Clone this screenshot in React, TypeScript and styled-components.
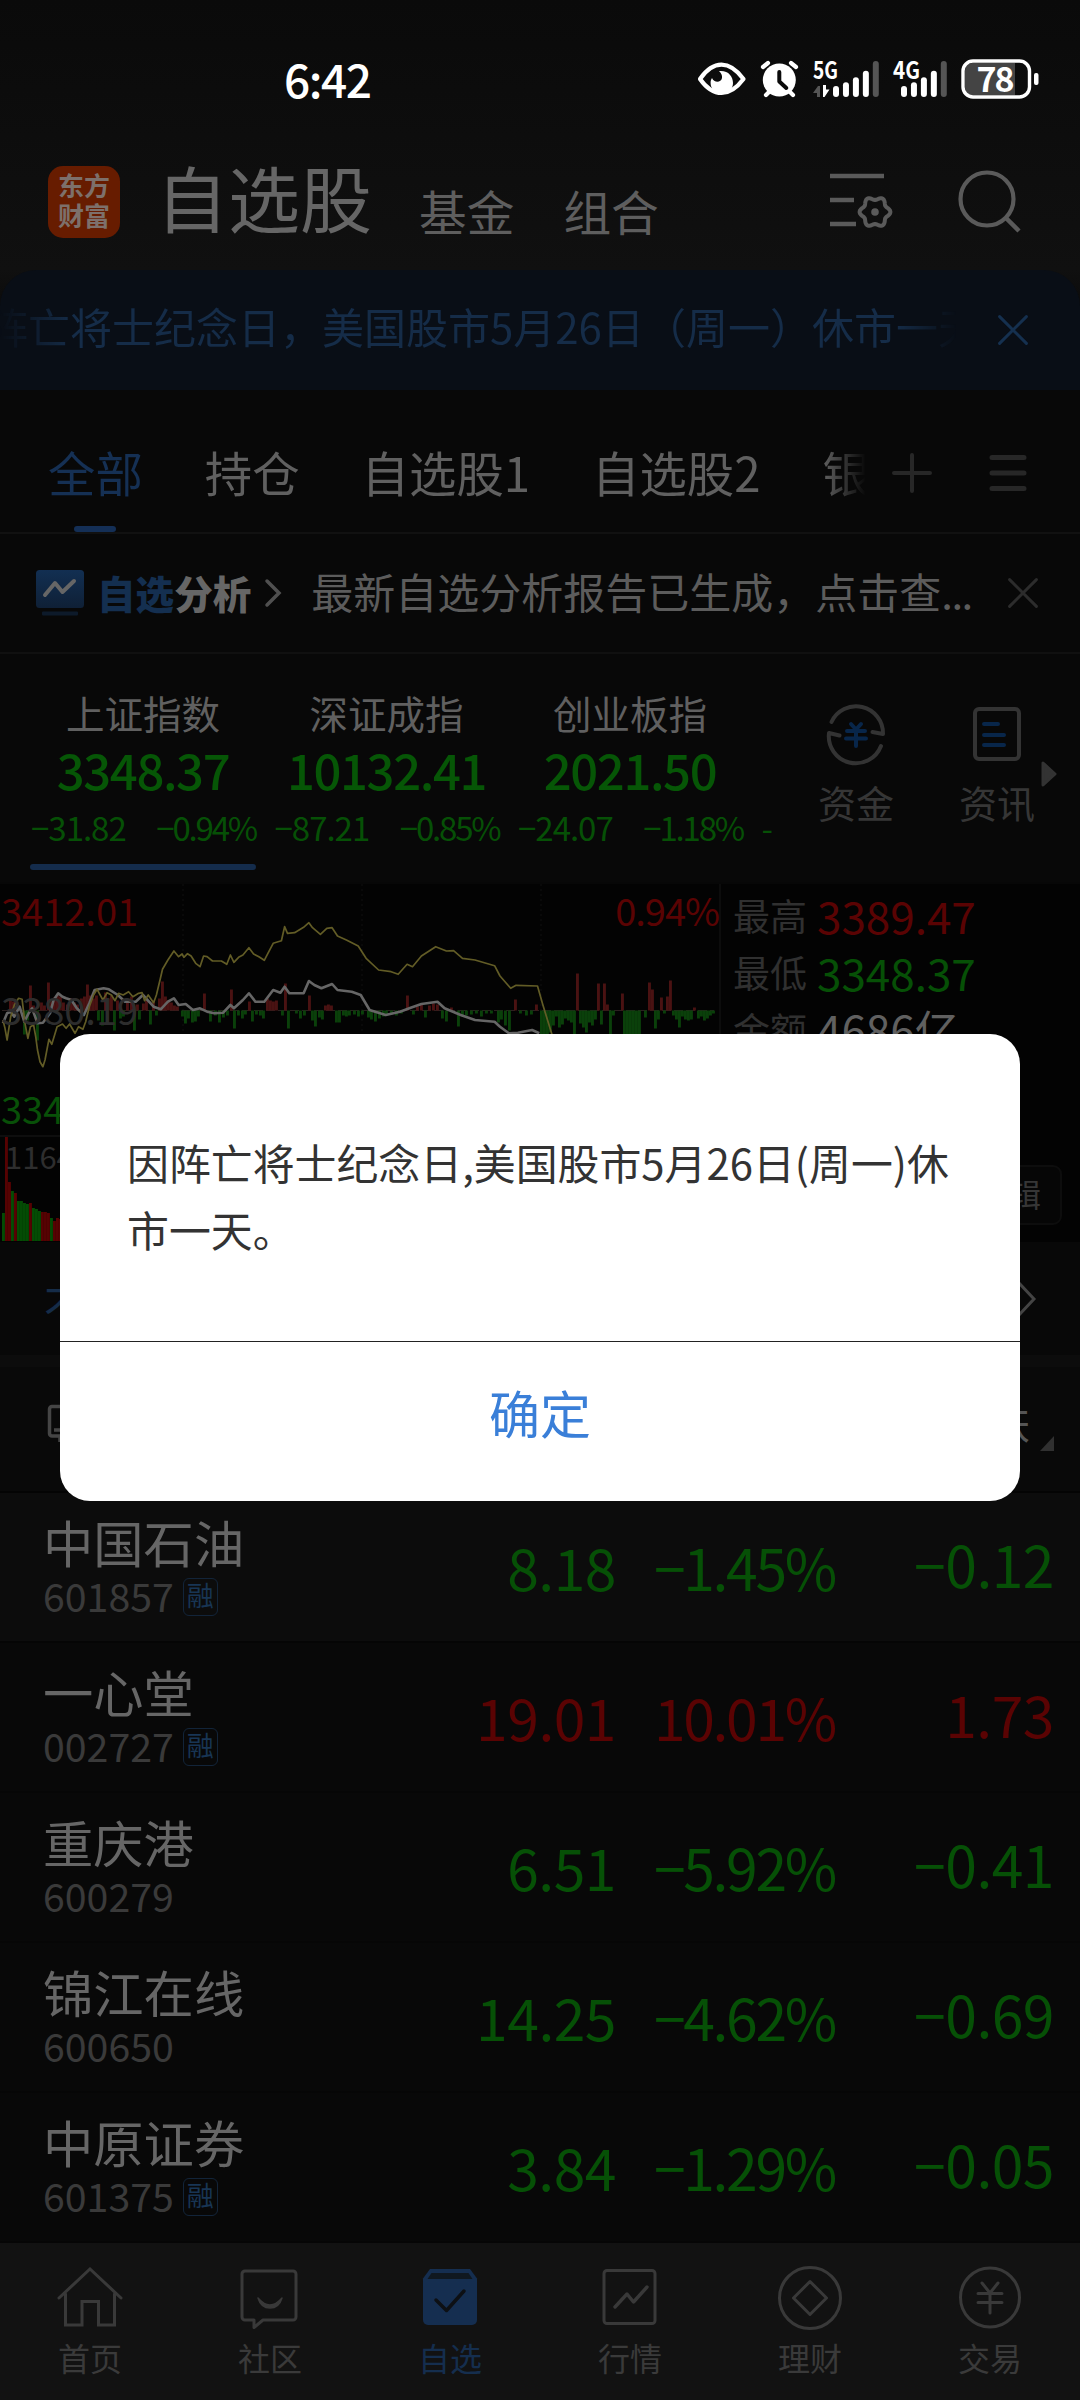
import React from "react";
import styled, { createGlobalStyle } from "styled-components";

const GREEN = "#065006";
const RED = "#5a0303";
const BLUE = "#142f50";
const GREY = "#666666";

const Global = createGlobalStyle`
  *, *::before, *::after { box-sizing: border-box; }
  body { margin: 0; background: #0a0a0a; }
  svg { display: block; flex: none; overflow: visible; }
`;

const Screen = styled.div`
  position: relative;
  display: flex;
  flex-direction: column;
  width: 1080px;
  height: 2400px;
  overflow: hidden;
  background: linear-gradient(#0a0a0a, #101010 270px, #0c0c0c 300px);
  color: ${GREY};
  font-family: "Noto Sans CJK SC", "Noto Sans", sans-serif;
  white-space: nowrap;
`;

/* status bar */
const StatusBar = styled.div`
  flex: none;
  height: 140px;
  padding: 55px 30px 0 284px;
  display: flex;
  justify-content: space-between;
  align-items: flex-start;
`;
const Clock = styled.div`
  font-size: 46px;
  line-height: 46px;
  font-weight: 500;
  letter-spacing: -1.5px;
  color: #fff;
`;

/* header */
const Header = styled.header`
  flex: none;
  height: 130px;
  padding: 0 58px 6px 48px;
  display: flex;
  align-items: center;
`;
const Logo = styled.div`
  width: 72px;
  height: 72px;
  border-radius: 15px;
  background: #671c00;
  color: #7d706b;
  font-size: 26px;
  line-height: 30px;
  font-weight: 700;
  text-align: center;
  padding-top: 4px;
`;
const Title = styled.h1`
  margin: 0 0 0 36px;
  padding-bottom: 12px;
  font-size: 72px;
  line-height: 80px;
  font-weight: 400;
`;
const HeaderLink = styled.div<{ $gap: number }>`
  margin-left: ${(p) => p.$gap}px;
  padding-top: 17px;
  font-size: 47.7px;
  line-height: 60px;
  color: #5e5e5e;
`;
const HeaderIcons = styled.div`
  margin-left: auto;
  display: flex;
  align-items: center;
  gap: 64px;
`;

/* banner */
const Banner = styled.section`
  flex: none;
  height: 120px;
  border-radius: 36px 36px 0 0;
  background: #090e16;
  color: #152c48;
  display: flex;
  align-items: center;
  padding-right: 52px;
`;
const Ticker = styled.div`
  width: 958px;
  overflow: hidden;
  display: flex;
  font-size: 42px;
  line-height: 60px;
  padding-bottom: 8px;
  mask-image: linear-gradient(90deg, transparent 0, #000 72px, #000 895px, transparent 956px);
`;
const TickerText = styled.span`
  margin-left: -56px;
`;
const RowClose = styled.div`
  margin-left: auto;
`;

/* tabs */
const Tabs = styled.nav`
  flex: none;
  height: 144px;
  border-bottom: 2px solid #111;
  background: #080808;
  display: flex;
  align-items: stretch;
  padding-left: 48px;
`;
const TabStrip = styled.div`
  width: 818px;
  overflow: hidden;
  display: flex;
  gap: 62px;
  mask-image: linear-gradient(90deg, #000 775px, transparent 818px);
`;
const Tab = styled.div<{ $active?: boolean }>`
  flex: none;
  display: flex;
  flex-direction: column;
  align-items: center;
  justify-content: space-between;
  padding-top: 50px;
  font-size: 47.4px;
  line-height: 64px;
  color: ${(p) => (p.$active ? "#153054" : "#606060")};
`;
const TabMark = styled.div`
  width: 42px;
  height: 6px;
  border-radius: 3px;
  background: #142f56;
`;
const TabTools = styled.div`
  display: flex;
  align-items: center;
  gap: 58px;
  padding: 23px 0 0 26px;
`;

/* analysis */
const Analysis = styled.section`
  flex: none;
  height: 120px;
  border-bottom: 2px solid #101010;
  background: #080808;
  display: flex;
  align-items: center;
  padding: 0 42px 0 36px;
`;
const AnalysisName = styled.div`
  margin: 0 13px 0 13px;
  padding-bottom: 3px;
  font-size: 38.6px;
  line-height: 50px;
  font-weight: 900;
  color: #666;
  span { color: ${BLUE}; }
`;
const AnalysisText = styled.div`
  margin-left: 29px;
  padding-bottom: 5px;
  font-size: 42px;
  line-height: 60px;
  color: #5c5c5c;
`;
const Dots = styled.span`
  letter-spacing: -1.6px;
`;

/* indices */
const Indices = styled.section`
  flex: none;
  height: 228px;
  background: #080808;
  display: flex;
`;
const IndexStrip = styled.div`
  width: 776px;
  padding-left: 30px;
  overflow: hidden;
  display: flex;
  gap: 17.5px;
`;
const IndexCard = styled.div`
  flex: none;
  width: 226px;
  display: flex;
  flex-direction: column;
  align-items: center;
  padding-top: 31px;
`;
const IndexName = styled.div`
  font-size: 38.5px;
  line-height: 54px;
  color: #606060;
`;
const IndexValue = styled.div`
  font-size: 49px;
  line-height: 60px;
  font-weight: 500;
  letter-spacing: -1.4px;
  color: #065606;
`;
const IndexDelta = styled.div`
  align-self: stretch;
  display: flex;
  justify-content: space-between;
  padding: 3px 0 0 1px;
  font-size: 33px;
  line-height: 50px;
  letter-spacing: -1px;
  color: ${GREEN};
`;
const DeltaPct = styled.span`
  letter-spacing: -2.2px;
`;
const IndexMark = styled.div`
  align-self: stretch;
  margin-top: 12px;
  height: 6px;
  border-radius: 3px;
  background: #142c4c;
`;
const Shortcuts = styled.div`
  display: flex;
  padding: 51px 0 0 42px;
  gap: 65px;
`;
const Shortcut = styled.div`
  display: flex;
  flex-direction: column;
  align-items: center;
  font-size: 38px;
  line-height: 50px;
  color: #363636;
  svg { margin-bottom: 14px; }
`;
const Arrow = styled.div`
  margin: 107px 0 0 6px;
`;

/* chart panel */
const Market = styled.section`
  flex: none;
  height: 360px;
  border-top: 2px solid #070707;
  background: #030303;
  display: flex;
`;
const Plot = styled.div`
  position: relative;
  width: 721px;
  border-right: 2px solid #0c0c0c;
`;
const PlotLabel = styled.span<{ $top: number; $color: string; $right?: boolean; $size?: number; $left?: number }>`
  position: absolute;
  top: ${(p) => p.$top}px;
  ${(p) => (p.$right ? "right: 0; letter-spacing: -1px;" : `left: ${p.$left ?? 1}px;`)}
  font-size: ${(p) => p.$size ?? 38}px;
  line-height: 40px;
  color: ${(p) => p.$color};
`;
const Quotes = styled.div`
  flex: 1;
  display: flex;
  flex-direction: column;
  padding: 3px 18px 17px 12px;
`;
const Quote = styled.div<{ $color: string }>`
  display: flex;
  gap: 10px;
  font-size: 44px;
  line-height: 57px;
  color: ${(p) => p.$color};
`;
const QuoteKey = styled.span`
  font-size: 37px;
  color: #303030;
`;
const EditButton = styled.div`
  margin: auto 0 0 auto;
  height: 60px;
  padding: 0 19px 0 20px;
  border: 2px solid #0d0d0d;
  border-radius: 9px;
  background: #060606;
  font-size: 32px;
  line-height: 52px;
  color: #363636;
`;

const NewsRow = styled.section`
  flex: none;
  height: 113px;
  background: #080808;
  padding: 0 44px;
  display: flex;
  align-items: center;
  justify-content: space-between;
  font-size: 42px;
  line-height: 60px;
  color: #152c48;
`;
const NewsText = styled.span`
  padding-top: 10px;
`;
const ListHead = styled.section`
  flex: none;
  height: 126px;
  margin-top: 12px;
  border-bottom: 2px solid #040404;
  background: #090909;
  display: flex;
  align-items: center;
  justify-content: space-between;
  padding: 0 26px 9px 46px;
  font-size: 42px;
  line-height: 60px;
  color: #555;
`;
const SortLabel = styled.div`
  display: flex;
  align-items: flex-end;
  gap: 10px;
  padding-bottom: 7px;
`;

/* stock rows */
const StockRow = styled.div<{ $raised?: boolean }>`
  flex: none;
  height: 150px;
  border-bottom: 2px solid ${(p) => (p.$raised ? "#050505" : "#060606")};
  background: ${(p) => (p.$raised ? "#0c0c0c" : "#080808")};
  display: grid;
  grid-template-columns: 397px 176px 219px 219px;
  padding-left: 43px;
`;
const StockName = styled.div`
  padding-top: 18px;
  font-size: 50.3px;
  line-height: 60px;
`;
const StockCode = styled.div`
  display: flex;
  align-items: center;
  gap: 9px;
  font-size: 39.3px;
  line-height: 48px;
  color: #3a3a3a;
`;
const Badge = styled.span`
  width: 35px;
  height: 38px;
  margin-top: 4px;
  border: 1.5px solid #122439;
  border-radius: 6px;
  font-size: 27px;
  line-height: 31px;
  color: #183554;
  display: flex;
  justify-content: center;
`;
const StockNumber = styled.div<{ $up?: boolean; $lift?: boolean; $tight?: boolean }>`
  padding-top: ${(p) => (p.$lift ? 37 : 40)}px;
  text-align: right;
  font-size: 57px;
  line-height: 66px;
  letter-spacing: ${(p) => (p.$tight ? -2.3 : -0.5)}px;
  color: ${(p) => (p.$up ? RED : GREEN)};
`;

/* bottom navigation */
const BottomNav = styled.nav`
  flex: none;
  height: 157px;
  margin-top: auto;
  background: #121212;
  display: grid;
  grid-template-columns: repeat(6, 180px);
`;
const NavItem = styled.div<{ $active?: boolean }>`
  display: flex;
  flex-direction: column;
  align-items: center;
  padding-top: 20px;
  font-size: 32px;
  line-height: 44px;
  color: ${(p) => (p.$active ? "#152e4e" : "#3a3a3a")};
  svg { margin-bottom: 6px; }
`;

/* dialog */
const Dialog = styled.div`
  position: absolute;
  top: 1034px;
  left: 60px;
  width: 960px;
  height: 467px;
  border-radius: 30px;
  background: #fff;
  display: flex;
  flex-direction: column;
`;
const Message = styled.p`
  margin: 0;
  height: 308px;
  padding: 94px 60px 0 67px;
  border-bottom: 1px solid #222;
  font-size: 41.9px;
  line-height: 67px;
  color: #333;
`;
const Confirm = styled.button`
  flex: 1;
  border: 0;
  background: none;
  padding: 0 0 20px;
  font: 400 51px/66px "Noto Sans CJK SC", sans-serif;
  color: #3a7fd8;
`;

const SignalBars = ({ x }: { x: number }) => (
  <g>
    {[31, 27.3, 22.3, 15.7, 6].map((top, i) => (
      <rect key={i} x={x + i * 9.95} y={top} width="6" height={42 - top} rx="3" fill={i === 4 ? "#555" : "#fff"} />
    ))}
  </g>
);

const StatusIcons = () => (
  <svg width="360" height="50" viewBox="0 0 360 50" fontFamily="Noto Sans CJK SC, sans-serif">
    <path d="M10 24C17 14 24 9.700 31.500 9.700S46 14 53.500 24C46 34 39 38 31.500 38S17 34 10 24Z" fill="none" stroke="#fff" strokeWidth="4.200" strokeLinejoin="round" />
    <path d="M29 16C38 15 43 21 43 28A11.200 11.200 0 0 1 20.600 28C20.600 26 21 24.500 22 23C24 28 31 28 32 23C32.500 20 31 18 29 16Z" fill="#fff" />
    <circle cx="89.300" cy="25" r="16.500" fill="#fff" />
    <g stroke="#fff" strokeWidth="4.200" strokeLinecap="round">
      <path d="M73 12l5-4M101 8l5 4M76 40l5-5M103 40l-5-5" />
    </g>
    <path d="M89.300 17v9.500l7 6.500" fill="none" stroke="#0a0a0a" strokeWidth="4" strokeLinecap="round" strokeLinejoin="round" />
    <text x="123" y="24" fontSize="24" fontWeight="700" fill="#fff" textLength="25" lengthAdjust="spacingAndGlyphs">5G</text>
    <path d="M123 38l5-7h2v11h-3v-4z" fill="#555" />
    <path d="M133 30h3v4.500h3.500L134.500 42H133z" fill="#fff" />
    <SignalBars x={143} />
    <text x="203" y="24" fontSize="24" fontWeight="700" fill="#fff" textLength="27" lengthAdjust="spacingAndGlyphs">4G</text>
    <SignalBars x={211} />
    <rect x="275" y="8" width="50" height="32" rx="7" fill="#444" />
    <rect x="318" y="8" width="7" height="32" fill="#444" />
    <rect x="273" y="6" width="66.500" height="36" rx="10" fill="none" stroke="#fff" strokeWidth="3.400" />
    <rect x="344" y="18" width="4.500" height="12" rx="2" fill="#fff" />
    <text x="286.500" y="36.500" fontSize="34" fontWeight="700" fill="#fff" textLength="38">78</text>
  </svg>
);

const gearPath = (() => {
  const pts: string[] = [];
  for (let i = 0; i <= 72; i++) {
    const a = (i / 72) * Math.PI * 2;
    const r = 13.700 + 1.700 * Math.cos(6 * a);
    pts.push(`${(45 + r * Math.cos(a)).toFixed(2)} ${(39 + r * Math.sin(a)).toFixed(2)}`);
  }
  return `M${pts.join("L")}Z`;
})();

const FilterIcon = () => (
  <svg width="64" height="58" viewBox="0 0 64 58" fill="none" stroke="#5a5a5a" strokeWidth="4.500">
    <path d="M0 3h54M0 27h24M0 51h26" />
    <path d={gearPath} strokeWidth="4" strokeLinejoin="round" />
    <circle cx="45" cy="39" r="3.800" fill="#5a5a5a" stroke="none" />
  </svg>
);

const SearchIcon = () => (
  <svg width="64" height="64" viewBox="0 0 64 64" fill="none" stroke="#5a5a5a" strokeWidth="4.200">
    <circle cx="29" cy="29" r="26.500" />
    <path d="M48 48l13 13" strokeWidth="4.500" />
  </svg>
);

const Cross = ({ size, color }: { size: number; color: string }) => (
  <svg width={size} height={size} viewBox="0 0 28 28" stroke={color} strokeWidth="2.800" strokeLinecap="round">
    <path d="M1.500 1.500l25 25M26.500 1.500l-25 25" />
  </svg>
);

const toPoints = (raw: string) =>
  raw
    .split(" ")
    .map((p) => p.split(",").map(Number))
    .map(([x, y]) => `${(x / 2.8).toFixed(1)},${(y / 3 - 4).toFixed(1)}`)
    .join(" ");

const leadLine = toPoints(
  "8,420 14,445 20,480 30,410 40,375 52,355 62,358 70,430 78,475 85,440 94,435 100,470 105,510 112,545 120,560 126,540 137,478 145,493 160,440 175,432 185,445 195,432 210,460 220,440 232,448 240,425 250,380 262,345 272,328 288,360 300,338 312,345 322,362 332,340 345,345 360,335 372,350 388,340 398,338 405,362 415,345 430,368 438,345 448,300 455,268 470,240 487,213 500,230 510,222 515,232 525,221 535,228 548,250 560,260 570,228 580,230 595,243 620,243 635,253 645,225 655,247 668,232 680,225 697,203 710,222 725,230 740,241 750,220 765,190 788,182 797,140 805,160 825,158 850,142 865,128 875,143 897,163 915,145 930,143 945,168 970,180 1003,198 1025,235 1060,270 1095,275 1115,283 1140,253 1155,260 1180,228 1220,200 1250,213 1270,212 1295,235 1330,240 1385,257 1400,288 1430,325 1445,316 1505,318 1520,375 1545,462 1570,500"
);
const indexLine = toPoints(
  "8,430 20,400 30,395 40,410 55,380 68,425 80,400 90,385 105,430 120,428 140,400 150,360 163,340 175,350 185,355 200,360 215,385 235,405 250,370 265,330 290,325 305,328 330,345 350,365 380,365 400,345 430,380 450,388 470,365 487,355 500,375 520,372 540,390 560,385 580,395 600,400 625,398 645,375 655,385 680,360 697,340 715,365 740,365 765,330 785,338 797,320 810,340 850,340 865,303 880,315 900,325 930,312 945,330 985,335 1010,345 1035,390 1080,405 1120,395 1150,383 1180,372 1225,365 1245,385 1290,405 1330,420 1385,425 1400,440 1425,460 1450,458 1490,450 1510,460"
);

/* x, height; positive bars rise, negative bars fall */
const momentum: [number, number][] = [
  [9, 11], [12, 9], [15, 5], [23, -24], [26, -10], [29, 25], [32, 5], [36, -30], [40, 8], [43, 5], [47, 28], [50, 10], [53, 13], [56, 16], [59, 14], [62, 8], [66, 6],
  [70, 12], [73, 8], [76, 6], [80, 12], [83, 14], [86, 26], [89, 15], [92, 12], [95, 15], [97, -10], [101, -15], [104, 18], [107, 12], [110, 15], [113, -20], [116, 10], [119, -8], [122, -6], [126, 10],
  [130, 14], [133, -20], [136, 6], [138, -9], [142, 7], [145, 10], [149, -14], [152, 10], [155, -5], [158, 12], [161, 29], [164, 14], [167, 10], [170, 8], [173, 5], [176, 4], [181, -6],
  [184, -13], [187, -8], [191, -12], [194, -11], [197, -6], [203, 17], [209, -11], [214, -5], [218, -12], [222, -7], [226, -5], [230, 21], [233, -18], [237, -5], [241, -8], [244, -4], [248, 9], [251, -11], [255, -4], [259, -5], [262, -8],
  [266, 12], [269, 10], [272, 9], [275, 10], [281, -5], [284, 27], [287, -18], [295, -3], [299, -8], [303, -5], [308, 15], [311, -10], [314, -16], [318, -7], [321, -9], [324, 5], [327, 6], [330, 5],
  [335, -12], [338, -12], [342, -5], [345, -6], [348, -5], [353, -4], [357, -6], [361, -4], [367, -7], [370, -9], [374, -11], [378, -8], [382, -6], [385, -4], [390, -4], [395, -5], [400, -3], [406, 15],
  [412, -4], [416, 4], [420, 6], [424, -7], [428, 5], [432, 7], [436, 6], [441, -8], [445, -11], [450, 3], [457, -16], [461, -6], [465, -5], [470, -4], [475, -3], [480, -6], [485, -3], [490, -3], [497, -12], [500, -9], [504, -15], [508, -20],
  [514, 11], [519, -3], [525, -5], [530, -4], [535, 6], [540, -24], [543, -24], [546, -24], [549, -22], [552, -15], [555, -6], [558, -17], [561, -14], [564, -8], [567, -10], [570, -12], [573, -24], [576, 37], [579, -13], [582, -17], [585, -22], [588, -12], [591, -15], [594, -9],
  [597, 27], [600, -14], [603, 27], [606, 6], [609, -24], [612, -5], [621, 17], [623, -24], [626, -24], [629, -24], [632, -24], [635, -24], [638, -24], [644, -7], [648, 28], [651, 21], [654, -18], [657, -9], [660, 13], [663, -3], [666, 14], [669, 30],
  [672, -5], [675, -9], [678, -17], [681, -6], [684, -9], [687, -10], [690, -9], [693, 3], [697, -8], [700, -6], [703, -10], [706, -8], [709, -5], [712, -3],
];

const volume: [number, boolean][] = [
  [28, false], [104, true], [59, true], [50, false], [48, true], [40, false], [40, false], [38, false], [37, false], [38, true],
  [33, false], [32, false], [30, false], [29, true], [29, true], [28, true], [23, false], [20, true], [23, true], [22, true],
];

const IndexChart = () => (
  <svg width="719" height="358" viewBox="0 0 719 358" fill="none">
    <g stroke="#0c0c0c" strokeWidth="1.500" strokeDasharray="2 3">
      <path d="M183 0V250M362 0V250M541 0V250" />
    </g>
    <path d="M0 252H719" stroke="#0e0e0e" strokeWidth="2" />
    <path d="M2 126.500H714" stroke="#2b2020" strokeWidth="1.200" strokeDasharray="9 3" />
    {momentum.map(([x, h], i) => (
      <rect key={i} x={x} y={h > 0 ? 126.500 - h : 126.500} width="2.900" height={Math.abs(h)} fill={h > 0 ? "#4a1212" : "#0a400a"} />
    ))}
    {volume.map(([h, up], i) => (
      <rect key={i} x={2 + i * 3} y={357 - h} width="2.900" height={h} fill={up ? "#560202" : "#044c04"} />
    ))}
    <polyline points={indexLine} stroke="#666" strokeWidth="2.600" strokeLinejoin="round" />
    <polyline points={leadLine} stroke="#625c26" strokeWidth="1.700" strokeLinejoin="round" />
  </svg>
);

const MoneyIcon = () => (
  <svg width="58" height="58" viewBox="0 0 58 58" fill="none" stroke="#333" strokeWidth="4" strokeLinecap="round" strokeLinejoin="round">
    <path d="M4.500 17A27 27 0 0 1 56 29L45.500 27" />
    <path d="M54 41A27 27 0 0 1 2 28L12.500 30.500" />
    <path d="M24 19l5 5.500L34 19M20 26h18M19 33.500h20M29 25v16" stroke="#08264a" />
  </svg>
);

const NewsIcon = () => (
  <svg width="48" height="58" viewBox="0 0 48 58" fill="none" stroke="#333" strokeWidth="4">
    <rect x="2" y="4" width="44" height="50" rx="4" />
    <path d="M11 19h14M11 30h20M11 40h20" stroke="#08264a" strokeLinecap="round" />
  </svg>
);

const NavGlyph = ({ name }: { name: string }) => (
  <svg width="64" height="66" viewBox="0 0 64 66" fill="none" stroke="#393939" strokeWidth="3" strokeLinejoin="round" strokeLinecap="round">
    {name === "首页" && <path d="M1 35L32 6l31 29M7.500 31v31h16.500V38.500h16.500V62H56.500V31" strokeLinejoin="miter" />}
    {name === "社区" && (
      <>
        <path d="M7 8h48a3 3 0 0 1 3 3v43a3 3 0 0 1-3 3H25l-9 7.500V57H7a3 3 0 0 1-3-3V11a3 3 0 0 1 3-3z" />
        <path d="M20 35q12 14 24 0q-3 10-12 10T20 35z" fill="#393939" strokeWidth="1.500" />
      </>
    )}
    {name === "自选" && (
      <g stroke="none" fill="#152e50">
        <path d="M12 6h40l7 9.500V57a5 5 0 0 1-5 5H10a5 5 0 0 1-5-5V15.500z" />
        <path d="M13.500 10h37l4 6h-45z" fill="#101820" />
        <path d="M18 37l10.500 10.500L46 28" fill="none" stroke="#0d1014" strokeWidth="3.500" />
      </g>
    )}
    {name === "行情" && (
      <>
        <rect x="6" y="7.500" width="51" height="53" rx="3" />
        <path d="M17 44l12-13 6.500 8L49 24" strokeWidth="3.400" />
      </>
    )}
    {name === "理财" && (
      <>
        <circle cx="32" cy="35" r="30.500" />
        <path d="M32 18.500L48.500 35 32 51.500 15.500 35z" />
      </>
    )}
    {name === "交易" && (
      <>
        <circle cx="32" cy="34.500" r="29.500" />
        <path d="M24 20l8 10 8-10M20 30.500h24M20 39.500h24M32 30.500V50" />
      </>
    )}
  </svg>
);

const indices = [
  { name: "上证指数", value: "3348.37", delta: "−31.82", pct: "−0.94%", on: true },
  { name: "深证成指", value: "10132.41", delta: "−87.21", pct: "−0.85%" },
  { name: "创业板指", value: "2021.50", delta: "−24.07", pct: "−1.18%" },
  { name: "", value: "\u00a0", delta: "-", pct: "" },
];

const stocks = [
  { name: "中国石油", code: "601857", margin: true, price: "8.18", pct: "−1.45%", diff: "−0.12", raised: true },
  { name: "一心堂", code: "002727", margin: true, price: "19.01", pct: "10.01%", diff: "1.73", up: true },
  { name: "重庆港", code: "600279", price: "6.51", pct: "−5.92%", diff: "−0.41" },
  { name: "锦江在线", code: "600650", price: "14.25", pct: "−4.62%", diff: "−0.69" },
  { name: "中原证券", code: "601375", margin: true, price: "3.84", pct: "−1.29%", diff: "−0.05" },
];

const tabs = ["全部", "持仓", "自选股1", "自选股2", "银行"];
const navItems = ["首页", "社区", "自选", "行情", "理财", "交易"];

export default function App() {
  return (
    <Screen>
      <Global />
      <StatusBar>
        <Clock>6:42</Clock>
        <StatusIcons />
      </StatusBar>

      <Header>
        <Logo>东方<br />财富</Logo>
        <Title>自选股</Title>
        <HeaderLink $gap={47}>基金</HeaderLink>
        <HeaderLink $gap={49}>组合</HeaderLink>
        <HeaderIcons>
          <FilterIcon />
          <SearchIcon />
        </HeaderIcons>
      </Header>

      <Banner>
        <Ticker>
          <TickerText>因阵亡将士纪念日，美国股市5月26日（周一）休市一天</TickerText>
        </Ticker>
        <RowClose><Cross size={30} color="#15304f" /></RowClose>
      </Banner>

      <Tabs>
        <TabStrip>
          {tabs.map((t, i) => (
            <Tab key={t} $active={i === 0}>
              {t}
              {i === 0 && <TabMark />}
            </Tab>
          ))}
        </TabStrip>
        <TabTools>
          <svg width="40" height="40" viewBox="0 0 40 40" stroke="#272727" strokeWidth="4" strokeLinecap="round">
            <path d="M2 20h36M20 2v36" />
          </svg>
          <svg width="38" height="38" viewBox="0 0 38 38" stroke="#272727" strokeWidth="5" strokeLinecap="round">
            <path d="M2 3.500h32M2 19h32M2 34.500h32" />
          </svg>
        </TabTools>
      </Tabs>

      <Analysis>
        <svg width="48" height="46" viewBox="0 0 48 46" fill="none">
          <defs>
            <linearGradient id="screen" x1="0" y1="0" x2="0" y2="1">
              <stop offset="0" stopColor="#122f52" />
              <stop offset="1" stopColor="#0f2036" />
            </linearGradient>
          </defs>
          <rect width="48" height="38" rx="3.500" fill="url(#screen)" />
          <path d="M9 25l10-12 7.500 9L38 11" stroke="#666" strokeWidth="4" strokeLinejoin="round" strokeLinecap="round" />
          <rect x="6" y="41.500" width="36" height="4" rx="1" fill="#0d1a2a" />
        </svg>
        <AnalysisName><span>自选</span>分析</AnalysisName>
        <svg width="18" height="28" viewBox="0 0 18 28" fill="none" stroke="#505050" strokeWidth="3.500" strokeLinecap="round">
          <path d="M3 2l12 12L3 26" />
        </svg>
        <AnalysisText>最新自选分析报告已生成，点击查<Dots>...</Dots></AnalysisText>
        <RowClose><Cross size={30} color="#2c2c2c" /></RowClose>
      </Analysis>

      <Indices>
        <IndexStrip>
          {indices.map((x, i) => (
            <IndexCard key={i}>
              <IndexName>{x.name || "\u00a0"}</IndexName>
              <IndexValue>{x.value}</IndexValue>
              <IndexDelta><span>{x.delta}</span><DeltaPct>{x.pct}</DeltaPct></IndexDelta>
              {x.on && <IndexMark />}
            </IndexCard>
          ))}
        </IndexStrip>
        <Shortcuts>
          <Shortcut><MoneyIcon />资金</Shortcut>
          <Shortcut><NewsIcon />资讯</Shortcut>
        </Shortcuts>
        <Arrow>
          <svg width="16" height="26" viewBox="0 0 16 26"><path d="M2 2v22L14 13z" fill="#333" stroke="#333" strokeWidth="3" strokeLinejoin="round" /></svg>
        </Arrow>
      </Indices>

      <Market>
        <Plot>
          <IndexChart />
          <PlotLabel $top={6} $color={RED}>3412.01</PlotLabel>
          <PlotLabel $top={6} $color={RED} $right>0.94%</PlotLabel>
          <PlotLabel $top={105} $color="#2d2d2d">3380.19</PlotLabel>
          <PlotLabel $top={204} $color="#085008">3348.37</PlotLabel>
          <PlotLabel $top={252} $left={5} $size={31} $color="#2e2e2e">11645</PlotLabel>
        </Plot>
        <Quotes>
          <Quote $color={RED}><QuoteKey>最高</QuoteKey>3389.47</Quote>
          <Quote $color={GREEN}><QuoteKey>最低</QuoteKey>3348.37</Quote>
          <Quote $color="#606060"><QuoteKey>金额</QuoteKey>4686亿</Quote>
          <EditButton>编辑</EditButton>
        </Quotes>
      </Market>

      <NewsRow>
        <NewsText>不</NewsText>
        <svg width="18" height="34" viewBox="0 0 18 34" fill="none" stroke="#444" strokeWidth="3"><path d="M1 1l15 16L1 33" /></svg>
      </NewsRow>

      <ListHead>
        <svg width="44" height="42" viewBox="0 0 44 42" fill="none" stroke="#454545" strokeWidth="3.500">
          <path d="M14 38v-6H6a2.500 2.500 0 0 1-2.500-2.500V5A2.500 2.500 0 0 1 6 2.500h34M8 26h30" />
        </svg>
        <SortLabel>
          涨跌
          <svg width="14" height="15" viewBox="0 0 14 15"><path d="M14 0v15H0z" fill="#303030" /></svg>
        </SortLabel>
      </ListHead>

      {stocks.map((s) => (
        <StockRow key={s.code} $raised={s.raised}>
          <div>
            <StockName>{s.name}</StockName>
            <StockCode>{s.code}{s.margin && <Badge>融</Badge>}</StockCode>
          </div>
          <StockNumber $up={s.up}>{s.price}</StockNumber>
          <StockNumber $up={s.up} $tight>{s.pct}</StockNumber>
          <StockNumber $up={s.up} $lift>{s.diff}</StockNumber>
        </StockRow>
      ))}

      <BottomNav>
        {navItems.map((n) => (
          <NavItem key={n} $active={n === "自选"}>
            <NavGlyph name={n} />
            {n}
          </NavItem>
        ))}
      </BottomNav>

      <Dialog role="dialog">
        <Message>因阵亡将士纪念日,美国股市5月26日(周一)休<br />市一天。</Message>
        <Confirm>确定</Confirm>
      </Dialog>
    </Screen>
  );
}
